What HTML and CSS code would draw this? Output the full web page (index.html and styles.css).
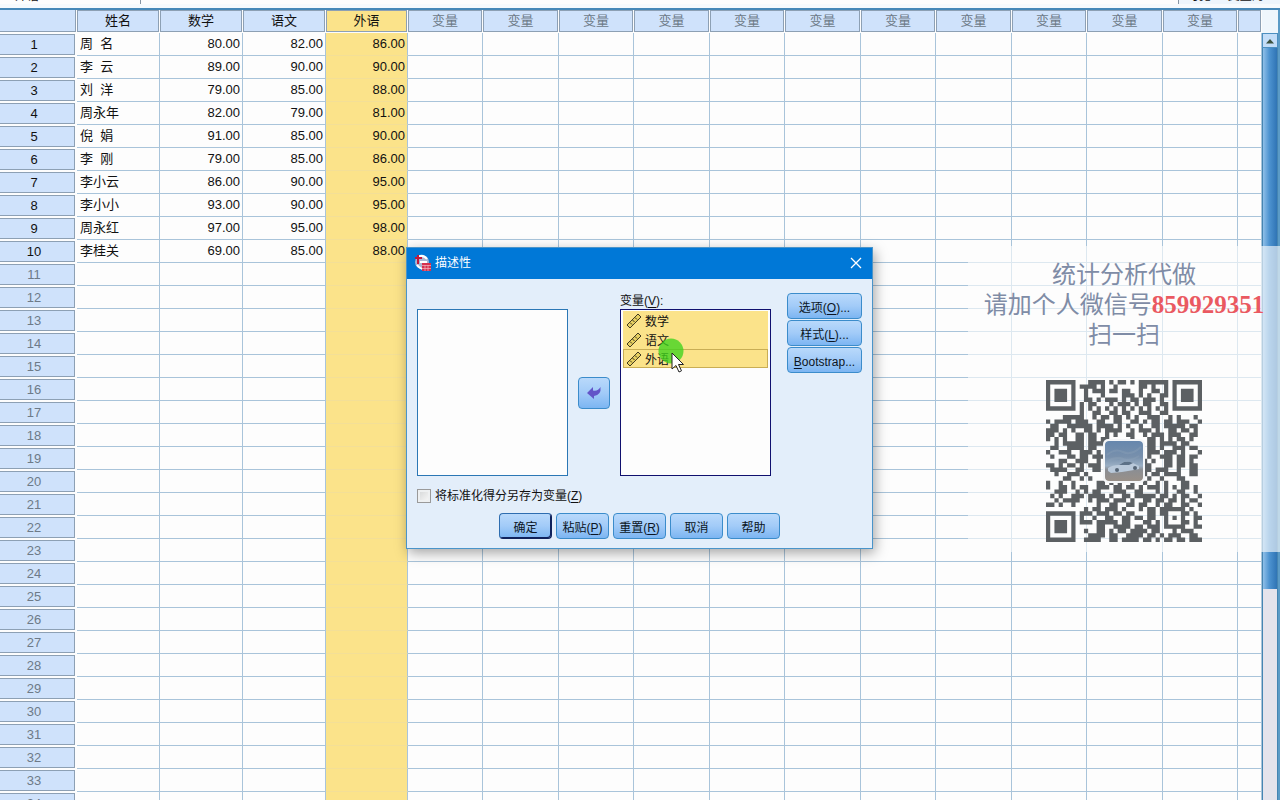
FILE: index.html
```html
<!DOCTYPE html>
<html lang="zh-CN">
<head>
<meta charset="utf-8">
<title>描述性</title>
<link rel="stylesheet" href="styles.css">
</head>
<body>
<header class="cellbar">
  <span class="cellbar-name">外语</span>
  <span class="cellbar-value"></span>
  <span class="cellbar-status">可见: 4 变量的</span>
</header>
<main class="sheet">
  <div class="grid-wrap">
    <table class="grid">
      <colgroup id="cols"></colgroup>
      <thead><tr id="head"></tr></thead>
      <tbody id="rows"></tbody>
    </table>
  </div>
  <div class="scroll">
    <div class="scroll-corner"></div>
    <button class="scroll-up" type="button" aria-label="向上滚动">
      <svg width="10" height="6" viewBox="0 0 10 6"><path d="M1 5.500 5 1l4 4.500z" fill="#3d5240"/></svg>
    </button>
    <div class="scroll-track"><div class="scroll-thumb"></div></div>
  </div>
</main>

<aside class="promo">
  <p class="promo-text">统计分析代做<br>请加个人微信号<strong>859929351</strong><br>扫一扫</p>
  <div class="qr">
    <svg id="qr" class="qr-code" viewBox="0 0 37 37" preserveAspectRatio="none" role="img" aria-label="二维码"></svg>
    <svg class="qr-photo" viewBox="0 0 38 40" aria-hidden="true">
      <defs>
        <linearGradient id="sky" x1="0" y1="0" x2="0" y2="1"><stop offset="0" stop-color="#6687ad"/><stop offset=".4" stop-color="#7890ac"/><stop offset=".62" stop-color="#9aafc4"/><stop offset=".72" stop-color="#8b8e93"/><stop offset="1" stop-color="#999088"/></linearGradient>
      </defs>
      <rect width="38" height="40" rx="4" fill="url(#sky)"/>
      <path d="M2 14q8-7 16-3t18-5M3 20q9-5 15-2t16-3" stroke="#91a4bb" stroke-width="2" fill="none" opacity=".3"/>
      <path d="M3 27q4-3 11-3l5-3q6-1 11 2l4 2v3l-5 1-12 2-11 1-3-2z" fill="#b9c9da"/>
      <path d="M14 24l5-3q5-1 9 1l-4 2z" fill="#5c7187"/>
      <circle cx="12" cy="29" r="2" fill="#566575"/><circle cx="30" cy="27" r="2" fill="#566575"/>
    </svg>
  </div>
</aside>

<section class="dialog" role="dialog" aria-labelledby="dlg-title">
  <header class="dlg-bar">
    <svg class="dlg-icon" width="17" height="17" viewBox="0 0 17 17" aria-hidden="true">
      <circle cx="8" cy="8" r="7" fill="#a9b6d2"/>
      <path d="M4 3q5-3 9 2M3 11q3 4 7 4M6 8h7" stroke="#fff" stroke-width="2" fill="none"/>
      <path d="M4 1v9M1 4h7" stroke="#c2183c" stroke-width="2" fill="none"/>
      <path d="M8 9h9v8H8z" fill="#d5304d"/>
      <path d="M8 11.500h9M8 14.500h9M11 11v6M14 11v6" stroke="#f3b5c0" stroke-width=".7"/>
    </svg>
    <h1 id="dlg-title" class="dlg-title">描述性</h1>
    <button class="dlg-close" type="button" aria-label="关闭">
      <svg width="12" height="12" viewBox="0 0 12 12"><path d="M1 1l10 10M11 1 1 11" stroke="#fff" stroke-width="1.300"/></svg>
    </button>
  </header>
  <form class="dlg-body">
    <div class="dlg-main">
      <ul class="list" role="listbox" aria-label="可用变量"></ul>
      <button class="btn move" type="button" aria-label="移动变量">
        <svg width="16" height="14" viewBox="0 0 16 14"><path d="M1 7 7 1v3.500q5 1 7.500-3.500Q15.500 9 8 10v3z" fill="#6355c8"/></svg>
      </button>
      <div class="target">
        <span id="vars-label" class="target-label">变量(<u>V</u>):</span>
        <ul class="list list-active" role="listbox" aria-labelledby="vars-label">
          <li class="item" role="option" aria-selected="true"><svg class="ruler" viewBox="0 0 16 16"><path d="M1 12 12 1l3 3L4 15z" fill="#e6cf60" stroke="#423b20"/><path d="M4 9.500l2 2M6.500 7l2 2M9 4.500l2 2" stroke="#423b20"/></svg>数学</li>
          <li class="item" role="option" aria-selected="true"><svg class="ruler" viewBox="0 0 16 16"><path d="M1 12 12 1l3 3L4 15z" fill="#e6cf60" stroke="#423b20"/><path d="M4 9.500l2 2M6.500 7l2 2M9 4.500l2 2" stroke="#423b20"/></svg>语文</li>
          <li class="item item-focus" role="option" aria-selected="true"><svg class="ruler" viewBox="0 0 16 16"><path d="M1 12 12 1l3 3L4 15z" fill="#e6cf60" stroke="#423b20"/><path d="M4 9.500l2 2M6.500 7l2 2M9 4.500l2 2" stroke="#423b20"/></svg>外语</li>
        </ul>
      </div>
      <div class="side">
        <button class="btn" type="button">选项(<u>O</u>)...</button>
        <button class="btn" type="button">样式(<u>L</u>)...</button>
        <button class="btn" type="button"><u>B</u>ootstrap...</button>
      </div>
    </div>
    <div class="save">
      <input class="tick" type="checkbox" id="save-z">
      <label for="save-z">将标准化得分另存为变量(<u>Z</u>)</label>
    </div>
    <div class="actions">
      <button class="btn btn-default" type="button">确定</button>
      <button class="btn" type="button">粘贴(<u>P</u>)</button>
      <button class="btn" type="button">重置(<u>R</u>)</button>
      <button class="btn" type="button">取消</button>
      <button class="btn" type="button">帮助</button>
    </div>
  </form>
</section>

<svg class="pointer" width="28" height="36" viewBox="0 0 28 36" aria-hidden="true">
  <circle cx="13" cy="13" r="12.500" fill="#3fd31d" opacity=".78"/>
  <path d="M14 15v16l4-3.500 3 6.500 2.500-1.200-3-6.300h5z" fill="#fff" stroke="#222" stroke-width="1"/>
</svg>
<script src="sheet.js"></script>
</body>
</html>
```
FILE: styles.css
```css
* { box-sizing: border-box; }

body {
  margin: 0;
  height: 100vh;
  overflow: hidden;
  display: flex;
  flex-direction: column;
  background: #fdfdfd;
  color: #111;
  font-family: "Liberation Sans", "Noto Sans CJK SC", sans-serif;
  font-size: 13px;
}

u { text-underline-offset: 2px; }

/* Cell bar */
.cellbar {
  flex: none;
  height: 10px;
  display: flex;
  align-items: flex-end;
  overflow: hidden;
  padding-bottom: 4px;
  background: #f6fafd;
  border-bottom: 2px solid #4688b8;
  font-size: 12px;
  line-height: 16px;
}
.cellbar-name { width: 141px; padding-left: 15px; border-right: 1px solid #8795a3; background: #fdfdfd; }
.cellbar-value { flex: 1; height: 16px; background: #fdfdfd; }
.cellbar-status { width: 102px; padding-left: 8px; border-left: 1px solid #8795a3; background: #edf5fc; white-space: nowrap; }

/* Data grid */
.sheet { flex: 1; min-height: 0; display: flex; border-right: 2px solid #5b9bc6; }
.grid-wrap { flex: 1; min-width: 0; overflow: hidden; }
.grid { width: 100%; table-layout: fixed; border-collapse: separate; border-spacing: 0; }
.c-row { width: 77px; }
.c-data { width: 83px; }
.c-data-s { width: 82px; }
.c-var { width: 75px; }
.c-var-w { width: 76px; }

.grid th, .grid td { height: 23px; padding: 0; font-weight: normal; line-height: 20px; white-space: pre; }
.grid td { padding: 0 2px 0 3px; border-right: 1px solid #a9c4da; border-bottom: 1px solid #a9c4da; }
.grid td.num { text-align: right; }
.grid td.picked { background: #fbe38a; border-bottom-color: #f3df97; }

.cap {
  height: 22px;
  margin: 0 1px 1px 0;
  border: 1px solid #8da0b4;
  background: #cfe2fb;
  text-align: center;
  overflow: hidden;
}
.cap-idle { color: #6d7a88; }
.cap-picked { background: #fbe38a; }
.cap-corner { border-left: 0; border-top: 0; }
.cap-row { height: 21px; margin: 0 2px 1px 0; padding-right: 6px; border-left: 0; }

/* Scroll bar */
.scroll { width: 16px; display: flex; flex-direction: column; }
.scroll-corner { height: 23px; background: #eff6fc; }
.scroll-up {
  height: 15px;
  display: flex;
  align-items: center;
  justify-content: center;
  padding: 0;
  border: 1px solid #4c8fc0;
  background: #c3ddf8;
}
.scroll-track { flex: 1; background: #e4e3ec; border-left: 1px solid #4585b2; border-right: 1px solid #4585b2; }
.scroll-thumb { height: 72%; background: linear-gradient(90deg, #8fbfe8, #4d93d0 45%, #2f74b5); }

/* Translucent promo card */
.promo {
  position: absolute;
  top: 246px;
  right: 0;
  width: 312px;
  padding: 14px 0 10px;
  display: flex;
  flex-direction: column;
  align-items: center;
  background: rgba(253, 253, 253, .62);
}
.promo-text {
  margin: 0;
  color: #7f8ca6;
  font-family: "Liberation Serif", "Noto Sans CJK SC", sans-serif;
  font-size: 24px;
  line-height: 30px;
  text-align: center;
  white-space: nowrap;
}
.promo-text strong { color: #ea5961; font-size: 25px; font-weight: 700; }
.qr { display: grid; place-items: center; margin-top: 30px; }
.qr-code { grid-area: 1 / 1; width: 156px; height: 162px; fill: #5c6063; }
.qr-photo { grid-area: 1 / 1; width: 42px; height: 44px; padding: 2px; border-radius: 5px; background: #f4f6f8; }

/* Dialog */
.dialog {
  position: absolute;
  top: 247px;
  left: 406px;
  width: 467px;
  border: 1px solid #4a94c9;
  background: #e3eefa;
  box-shadow: 2px 4px 12px rgba(0, 0, 0, .35);
  font-size: 12px;
  line-height: 16px;
}
.dlg-bar { height: 31px; display: flex; align-items: center; gap: 4px; padding: 0 10px 2px 7px; background: #0078d7; color: #fff; }
.dlg-title { flex: 1; margin: 0; font-size: 12px; font-weight: normal; }
.dlg-close { display: flex; padding: 0; border: 0; background: none; }
.dlg-body { padding: 14px 10px 9px; }
.dlg-main { display: flex; align-items: flex-end; justify-content: space-between; }

.list { width: 151px; height: 167px; margin: 0; padding: 0; border: 1px solid #2b77b5; background: #fdfdfd; list-style: none; }
.list-active { padding: 1px 2px; border-color: #10106e; }
.item { height: 19px; display: flex; align-items: center; gap: 3px; padding: 2px 0 0 2px; background: #fbe38a; border: 1px solid #fbe38a; }
.item-focus { border-color: #c9ae55; }
.ruler { width: 16px; height: 16px; margin-top: -2px; }
.target { display: flex; flex-direction: column; }
.target-label { height: 16px; }
.side { width: 75px; align-self: flex-start; display: flex; flex-direction: column; gap: 1px; margin-left: 6px; }

.btn {
  height: 26px;
  padding: 3px 0 0;
  border: 1px solid #3b8ccb;
  border-radius: 4px;
  background: linear-gradient(#b9d9fb, #a2cbf8 50%, #7cb5f2);
  color: #0b1524;
  font: inherit;
  white-space: nowrap;
}
.move { width: 32px; height: 32px; display: flex; align-items: center; justify-content: center; margin-bottom: 67px; padding: 0; }
.save { display: flex; align-items: center; gap: 4px; margin-top: 12px; }
.tick {
  appearance: none;
  width: 14px;
  height: 14px;
  margin: 0;
  border: 1px solid #9a9a9a;
  background: linear-gradient(135deg, #d3d5d6, #fafafa);
  box-shadow: inset 0 0 0 2px #eef0f1;
}
.actions { display: flex; justify-content: center; gap: 4px; margin-top: 9px; }
.actions .btn { width: 53px; }
.actions .btn-default { border-color: #2e6db0 #10225c #10225c #2e6db0; box-shadow: inset -1px -1px 0 #10225c; }

.pointer { position: absolute; top: 338px; left: 658px; }
```
FILE: sheet.js
```js
const idleColumns = 12;
const totalRows = 34;
const names = ['姓名', '数学', '语文', '外语'];
const data = [
  ['周  名', '80.00', '82.00', '86.00'],
  ['李  云', '89.00', '90.00', '90.00'],
  ['刘  洋', '79.00', '85.00', '88.00'],
  ['周永年', '82.00', '79.00', '81.00'],
  ['倪  娟', '91.00', '85.00', '90.00'],
  ['李  刚', '79.00', '85.00', '86.00'],
  ['李小云', '86.00', '90.00', '95.00'],
  ['李小小', '93.00', '90.00', '95.00'],
  ['周永红', '97.00', '95.00', '98.00'],
  ['李桂关', '69.00', '85.00', '88.00']
];

let cols = '<col class="c-row"><col class="c-data"><col class="c-data"><col class="c-data"><col class="c-data-s">';
let head = '<th><div class="cap cap-corner"></div></th>';
names.forEach((n, i) => {
  head += `<th scope="col"><div class="cap${i === 3 ? ' cap-picked' : ''}">${n}</div></th>`;
});
for (let i = 0; i < idleColumns; i++) {
  const last = i === idleColumns - 1;
  cols += last ? '<col>' : `<col class="${i % 2 ? 'c-var-w' : 'c-var'}">`;
  head += `<th scope="col"><div class="cap cap-idle">${last ? '' : '变量'}</div></th>`;
}
document.getElementById('cols').innerHTML = cols;
document.getElementById('head').innerHTML = head;

let rows = '';
for (let r = 0; r < totalRows; r++) {
  const rec = data[r];
  rows += `<tr><th scope="row"><div class="cap cap-row${rec ? '' : ' cap-idle'}">${r + 1}</div></th>`;
  for (let c = 0; c < names.length + idleColumns; c++) {
    const cls = [c > 0 && c < 4 ? 'num' : '', c === 3 ? 'picked' : ''].join(' ').trim();
    rows += `<td class="${cls}">${rec && rec[c] ? rec[c] : ''}</td>`;
  }
  rows += '</tr>';
}
document.getElementById('rows').innerHTML = rows;

const modules = [
  '#######...####.#.##.#.#######.#######',
  '#.....#.####.#..#.....##.#..#.#.....#',
  '#.###.#..#.###.##.##..#..##.#.#.###.#',
  '#.###.#..#...#....###.#.#..##.#.###.#',
  '#.###.#..##.#.###.#.##.###.#..#.###.#',
  '#.....#.#.##...#.###.#.##..##.#.....#',
  '#######.#.#.#.#.#.#.#.#.#.#.#.#######',
  '........#..##..##.##..###..##........',
  '....#####..#.##.##.#.#..###..#.#...#.',
  '#.####.###..##..##..##.#.##.##.###..#',
  '.##..######.####.#.#..#..##.#####.##.',
  '###.#.#..##.#.####..#.###.#..##.##.#.',
  '##.##..##.##..#.#..##..#.###.###..##.',
  '#.#.#..##.##.##.....#...##.#.#.##.#..',
  '..#.#####.####..........##.####.##...',
  '.##..####.##............##.#..###.##.',
  '#..###..###.#...........###.###.#...#',
  '.#...##.##.###..........#..###.##.##.',
  '...##..###..#..........#.#..##.##.#..',
  '##.#.##.#.###..........##...##.##.##.',
  '.####..##..##..........##.###..#..##.',
  '..#..###.#.............#.##.####..##.',
  '....##..#.#.............#..#...##....',
  '#..#..#.....##.#.#..#..#..#.#...##...',
  '#..##.#.##..###.##.##.#.###.#.#.##.#.',
  '..###..#.#.##...###..##...#.#..##..#.',
  '.#.#..###.####.#..##.#####.##.#.##..#',
  '..#.####..#.###.###.#..##.##.##.#.##.',
  '##.#..#.....#..##..##.##..#.##..##..#',
  '.........#.##.###.#...#.##.######.#..',
  '#######.###.###.##.##...##.##...##.#.',
  '#.....#.#..#..##..##.##.##..#.#.#..##',
  '#.###.#.###.#####.##...##.#.#...##.#.',
  '#.###.#.....##..####.##.###.#####..##',
  '#.###.#..#..##.#.##.####.##...#.###..',
  '#.....#...####.##..####.##.#.###..##.',
  '#######..####..##.####.##.#.##.##.###'
];
let d = '';
modules.forEach((line, y) => {
  for (const m of line.matchAll(/#+/g)) d += `M${m.index} ${y}h${m[0].length}v1h-${m[0].length}z`;
});
document.getElementById('qr').innerHTML = `<path d="${d}"/>`;
```
